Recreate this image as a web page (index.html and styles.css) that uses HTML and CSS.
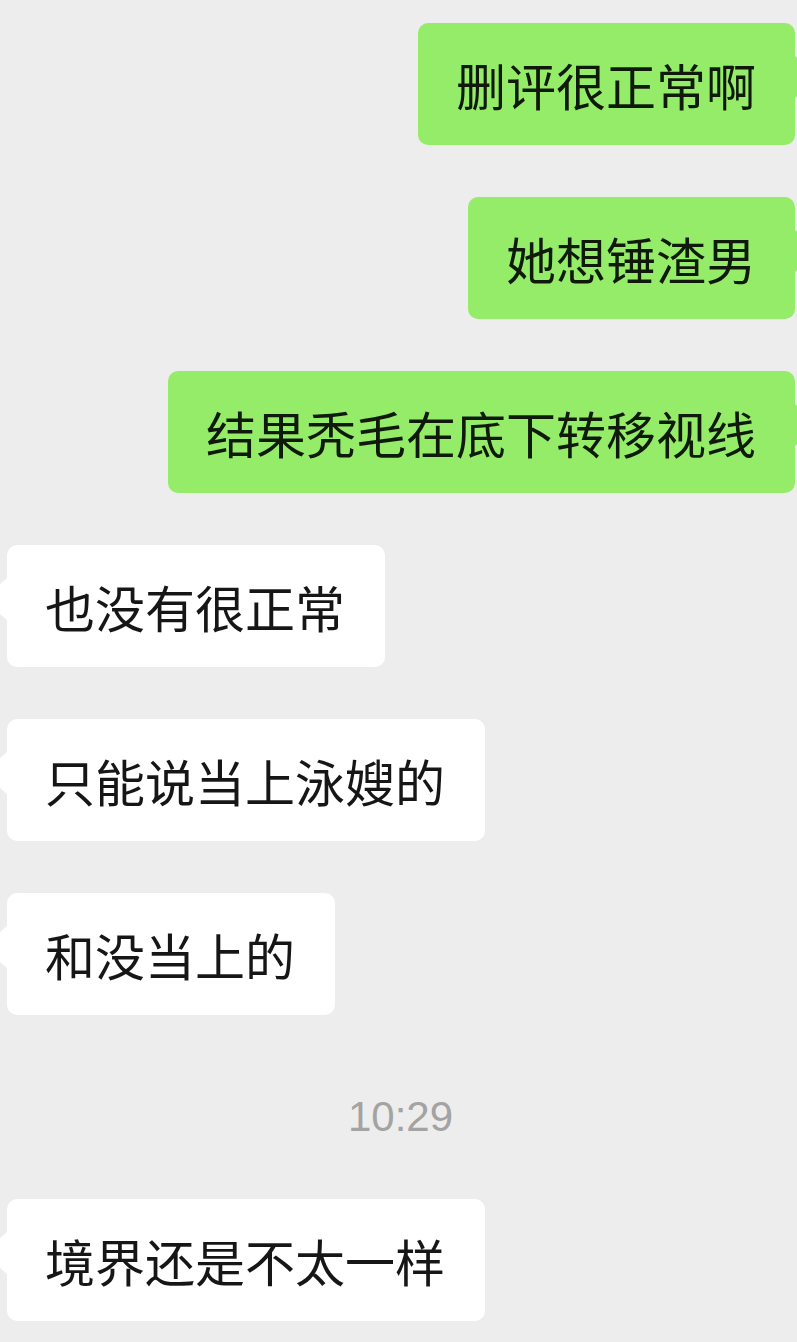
FILE: index.html
```html
<!DOCTYPE html>
<html lang="zh-CN">
<head>
<meta charset="utf-8">
<title>聊天</title>
<link rel="stylesheet" href="styles.css">
</head>
<body>
<div class="chat">
  <div class="row mine"><div class="bubble">删评很正常啊</div></div>
  <div class="row mine"><div class="bubble">她想锤渣男</div></div>
  <div class="row mine"><div class="bubble">结果秃毛在底下转移视线</div></div>
  <div class="row theirs"><div class="bubble">也没有很正常</div></div>
  <div class="row theirs"><div class="bubble">只能说当上泳嫂的</div></div>
  <div class="row theirs"><div class="bubble">和没当上的</div></div>
  <div class="time">10:29</div>
  <div class="row theirs"><div class="bubble">境界还是不太一样</div></div>
</div>
</body>
</html>
```

FILE: styles.css
```css
html, body {
  margin: 0;
  padding: 0;
  background: #ededed;
}
.chat {
  width: 797px;
  height: 1342px;
  overflow: hidden;
  padding-top: 23px;
  box-sizing: border-box;
  display: flex;
  flex-direction: column;
  font-family: "Noto Sans CJK SC", "Noto Sans", sans-serif;
}
.row {
  display: flex;
  margin-bottom: 52px;
}
.row.mine {
  justify-content: flex-end;
  padding-right: 2px;
}
.row.theirs {
  justify-content: flex-start;
  padding-left: 7px;
}
.bubble {
  position: relative;
  font-size: 50px;
  line-height: 50px;
  padding: 36px 39px 36px 38px;
  border-radius: 10px;
  color: #161616;
  white-space: nowrap;
}
.mine .bubble {
  background: #95ec69;
  color: #0f1a0a;
}
.theirs .bubble {
  background: #ffffff;
  padding-right: 40px;
}
.bubble::before {
  content: "";
  position: absolute;
  top: 33px;
  width: 0;
  height: 0;
  border-top: 21px solid transparent;
  border-bottom: 21px solid transparent;
}
.theirs .bubble::before {
  left: -24px;
  border-right: 24px solid #ffffff;
}
.mine .bubble::before {
  right: -24px;
  border-left: 24px solid #95ec69;
}
.time {
  margin-top: 24px;
  margin-bottom: 56px;
  height: 52px;
  line-height: 52px;
  text-align: center;
  font-family: "Liberation Sans", Arial, sans-serif;
  font-size: 42px;
  color: #a3a3a3;
  padding-left: 4px;
}
.time + .row {
  margin-top: 0;
}
```
